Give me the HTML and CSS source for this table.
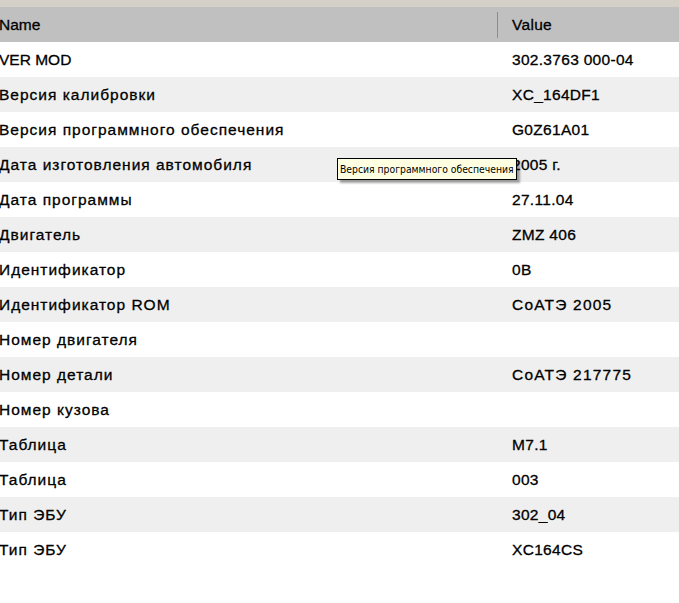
FILE: index.html
```
<!DOCTYPE html>
<html>
<head>
<meta charset="utf-8">
<link rel="stylesheet" href="styles.css">
</head>
<body>
<div class="topstrip"></div>
<div class="grid">
  <div class="head">
    <div class="c1">Name</div>
    <div class="sep"></div>
    <div class="c2">Value</div>
  </div>
  <div class="row"><div class="c1">VER MOD</div><div class="c2">302.3763 000-04</div></div>
  <div class="row alt"><div class="c1 cyr">Версия калибровки</div><div class="c2">XC_164DF1</div></div>
  <div class="row"><div class="c1 cyr">Версия программного обеспечения</div><div class="c2">G0Z61A01</div></div>
  <div class="row alt"><div class="c1 cyr">Дата изготовления автомобиля</div><div class="c2">2005 г.</div></div>
  <div class="row"><div class="c1 cyr">Дата программы</div><div class="c2">27.11.04</div></div>
  <div class="row alt"><div class="c1 cyr">Двигатель</div><div class="c2">ZMZ 406</div></div>
  <div class="row"><div class="c1 cyr">Идентификатор</div><div class="c2">0B</div></div>
  <div class="row alt"><div class="c1 cyr">Идентификатор ROM</div><div class="c2 cyr">CoATЭ 2005</div></div>
  <div class="row"><div class="c1 cyr">Номер двигателя</div><div class="c2"></div></div>
  <div class="row alt"><div class="c1 cyr">Номер детали</div><div class="c2 cyr">CoATЭ 217775</div></div>
  <div class="row"><div class="c1 cyr">Номер кузова</div><div class="c2"></div></div>
  <div class="row alt"><div class="c1 cyr">Таблица</div><div class="c2">M7.1</div></div>
  <div class="row"><div class="c1 cyr">Таблица</div><div class="c2">003</div></div>
  <div class="row alt"><div class="c1 cyr">Тип ЭБУ</div><div class="c2">302_04</div></div>
  <div class="row"><div class="c1 cyr">Тип ЭБУ</div><div class="c2">XC164CS</div></div>
</div>
<div class="tooltip">Версия программного обеспечения</div>
</body>
</html>
```
FILE: styles.css
```
html, body {
  margin: 0;
  padding: 0;
  background: #ffffff;
  width: 679px;
  height: 603px;
  overflow: hidden;
}
body {
  position: relative;
  font-family: "Liberation Sans", Arial, sans-serif;
  font-size: 15.5px;
  color: #000;
  -webkit-text-stroke: 0.3px #000;
}
.topstrip {
  height: 7px;
  background: #d4d0c8;
}
.grid {
  display: flex;
  flex-direction: column;
}
.head {
  display: flex;
  align-items: center;
  height: 35px;
  background: #c0c0c0;
}
.row {
  display: flex;
  align-items: center;
  height: 35px;
  background: #ffffff;
}
.row.alt {
  background: #efefef;
}
.c1 {
  flex: none;
  width: 499px;
  margin-left: -1px;
  white-space: nowrap;
}
.head .c1 {
  width: 498px;
}
.c1.cyr {
  letter-spacing: 1px;
}
.c2 {
  flex: 1;
  padding-left: 14px;
  white-space: nowrap;
  letter-spacing: 0.3px;
}
.c2.cyr {
  letter-spacing: 1.2px;
}
.sep {
  flex: none;
  width: 1px;
  height: 26px;
  background: #8c8c8c;
}
.tooltip {
  position: absolute;
  left: 337px;
  top: 158px;
  height: 20px;
  padding: 0 2px 0 2px;
  line-height: 20px;
  background: #ffffe1;
  border: 1px solid #000;
  font-family: "DejaVu Sans Condensed", "DejaVu Sans", Tahoma, sans-serif;
  font-stretch: condensed;
  font-size: 10.3px;
  -webkit-text-stroke: 0;
  box-shadow: 3px 3px 2px rgba(0,0,0,0.35);
  white-space: nowrap;
}
```
